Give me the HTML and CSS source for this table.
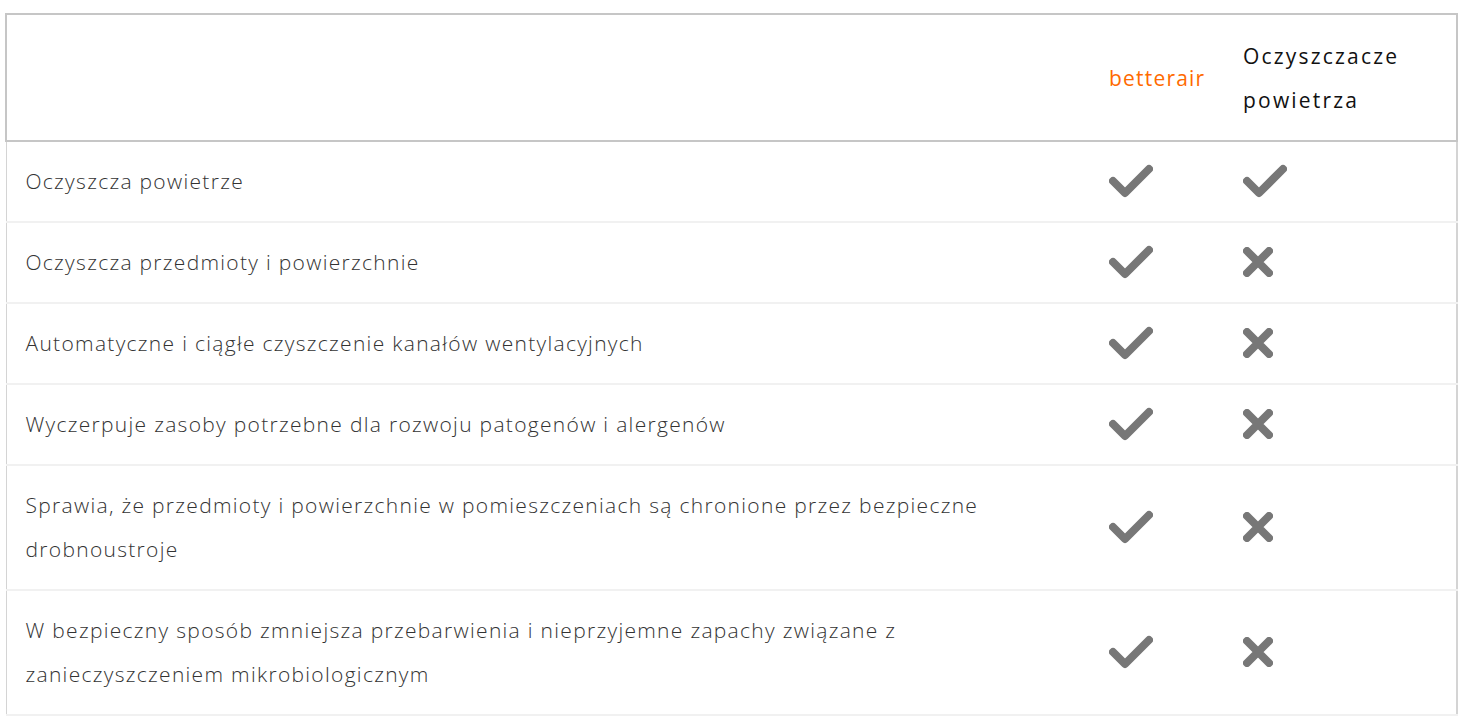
FILE: index.html
```html
<!DOCTYPE html>
<html lang="pl">
<head>
<meta charset="utf-8">
<title>Porównanie</title>
<link rel="stylesheet" href="styles.css">
</head>
<body>
<svg width="0" height="0" class="defs">
  <defs>
    <symbol id="ok" viewBox="0 0 44 34">
      <path d="M4 17 L16 29 L40 5" fill="none" stroke="#777" stroke-width="8" stroke-linecap="round" stroke-linejoin="round"/>
    </symbol>
    <symbol id="no" viewBox="0 0 30 30">
      <path d="M4 4 L26 26 M26 4 L4 26" fill="none" stroke="#777" stroke-width="8" stroke-linecap="round"/>
    </symbol>
  </defs>
</svg>
<table class="cmp">
  <colgroup>
    <col class="c1"><col class="c2"><col class="c3">
  </colgroup>
  <thead>
    <tr>
      <th class="h-empty"></th>
      <th class="h-brand">betterair</th>
      <th class="h-other">Oczyszczacze<br>powietrza</th>
    </tr>
  </thead>
  <tbody>
    <tr><td>Oczyszcza powietrze</td><td><svg class="ic-ok"><use href="#ok"/></svg></td><td><svg class="ic-ok"><use href="#ok"/></svg></td></tr>
    <tr><td>Oczyszcza przedmioty i powierzchnie</td><td><svg class="ic-ok"><use href="#ok"/></svg></td><td><svg class="ic-no"><use href="#no"/></svg></td></tr>
    <tr><td>Automatyczne i ciągłe czyszczenie kanałów wentylacyjnych</td><td><svg class="ic-ok"><use href="#ok"/></svg></td><td><svg class="ic-no"><use href="#no"/></svg></td></tr>
    <tr><td>Wyczerpuje zasoby potrzebne dla rozwoju patogenów i alergenów</td><td><svg class="ic-ok"><use href="#ok"/></svg></td><td><svg class="ic-no"><use href="#no"/></svg></td></tr>
    <tr><td>Sprawia, że przedmioty i powierzchnie w pomieszczeniach są chronione przez bezpieczne<br>drobnoustroje</td><td><svg class="ic-ok"><use href="#ok"/></svg></td><td><svg class="ic-no"><use href="#no"/></svg></td></tr>
    <tr><td>W bezpieczny sposób zmniejsza przebarwienia i nieprzyjemne zapachy związane z<br>zanieczyszczeniem mikrobiologicznym</td><td><svg class="ic-ok"><use href="#ok"/></svg></td><td><svg class="ic-no"><use href="#no"/></svg></td></tr>
  </tbody>
</table>
</body>
</html>
```
FILE: styles.css
```css
html, body {
  margin: 0;
  padding: 0;
  background: #fff;
}
body {
  padding: 13px 8px 0 5px;
  font-family: "Open Sans", Lato, "Liberation Sans", sans-serif;
}
.defs {
  position: absolute;
  width: 0;
  height: 0;
}
.cmp {
  width: 1451px;
  border-collapse: collapse;
  table-layout: fixed;
}
.c1 { width: 1084px; }
.c2 { width: 134px; }
.c3 { width: 233px; }

.cmp thead th {
  border-top: 2px solid #c6c6c6;
  border-bottom: 2px solid #c6c6c6;
  padding: 19px 19px 18px 19px;
  height: 88px;
  font-weight: 400;
  font-size: 21px;
  letter-spacing: 2.2px;
  line-height: 44px;
  text-align: left;
  color: #111;
  vertical-align: middle;
}
.cmp thead th.h-empty { border-left: 2px solid #c6c6c6; }
.cmp thead th.h-other { border-right: 2px solid #c6c6c6; }
.cmp thead th.h-brand {
  color: #ff6a00;
  letter-spacing: 1.2px;
}

.cmp tbody td {
  border-bottom: 2px solid #f1f1f1;
  padding: 17px 19px 18px 19px;
  font-size: 21px;
  font-weight: 300;
  letter-spacing: 1.3px;
  line-height: 44px;
  color: #333;
  vertical-align: middle;
}
.cmp tbody td:first-child { border-left: 1px solid #d4d4d4; }
.cmp tbody td:last-child { border-right: 2px solid #d4d4d4; }

.ic-ok {
  display: block;
  width: 44px;
  height: 34px;
}
.ic-no {
  display: block;
  width: 30px;
  height: 30px;
}
```
